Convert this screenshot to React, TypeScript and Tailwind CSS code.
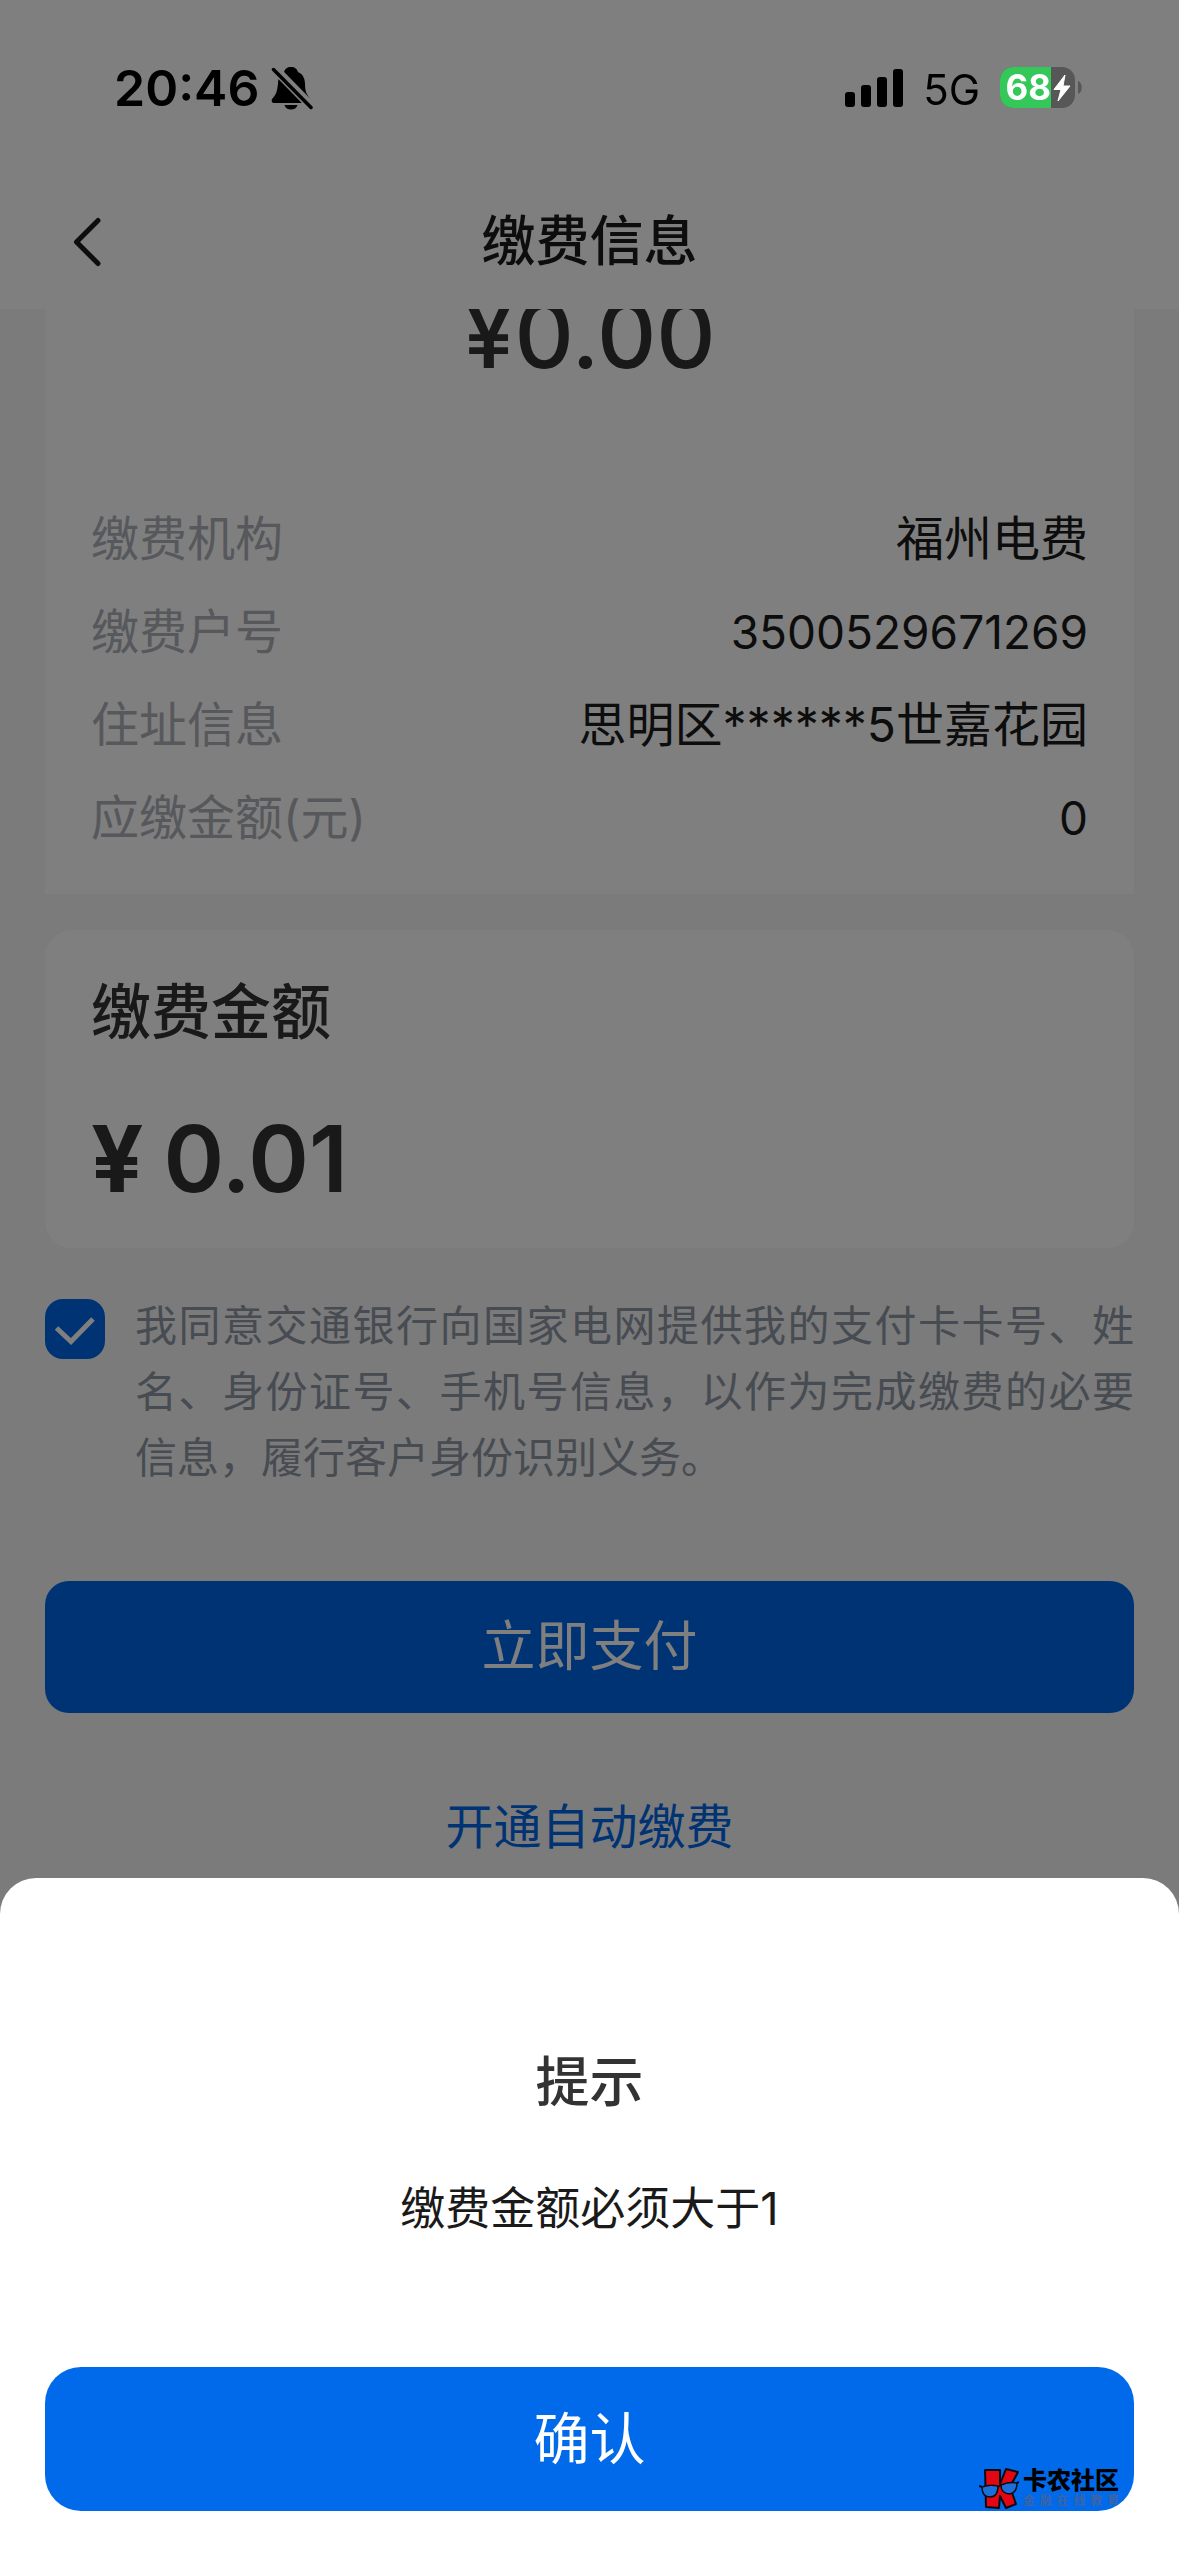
import { useState } from 'react';

const details = [
  { label: '缴费机构', value: '福州电费' },
  { label: '缴费户号', value: '3500529671269', numeric: true },
  { label: '住址信息', value: '思明区******5世嘉花园' },
  { label: '应缴金额(元)', value: '0', numeric: true },
];

function StatusBar() {
  return (
    <div className="fixed inset-x-0 top-0 z-30 flex h-[175px] items-center justify-between pl-[114px] pr-[97px] text-black">
      <div className="flex items-center gap-3">
        <span className="text-[50px] leading-[60px] font-semibold">20:46</span>
        <svg className="h-[44px] w-[42px]" viewBox="0 0 42 44" aria-label="静音">
          <path
            d="M20 1c4 0 6 2 7 5 5 2 7 7 7 12 0 8 2 11 6 16 1 1 0 3-2 3H3c-2 0-3-2-2-4 4-4 5-7 6-15 0-6 2-10 6-12 1-3 3-5 7-5Z"
            fill="black"
          />
          <path d="M13.500 39h13c-.8 3-3.300 4.500-6.500 4.500S14.300 42 13.500 39Z" fill="black" />
          <path d="M2 1l40 41" stroke="#808080" strokeWidth="9" />
          <path d="M2.500 3.500l37.500 38" stroke="black" strokeWidth="3.500" strokeLinecap="round" />
        </svg>
      </div>
      <div className="flex items-center">
        <svg className="h-[38px] w-[58px]" viewBox="0 0 58 38" aria-label="信号">
          <rect x="0" y="23" width="10" height="15" rx="3" />
          <rect x="16" y="16" width="10" height="22" rx="3" />
          <rect x="32" y="8" width="10" height="30" rx="3" />
          <rect x="48" y="0" width="10" height="38" rx="3" />
        </svg>
        <span className="ml-5 pt-1 text-[42px] leading-[48px]">5G</span>
        <div className="ml-5 flex h-[41px] w-[75px] items-center overflow-hidden rounded-[13px] bg-[#575757]">
          <span className="flex h-full w-[51px] items-center justify-end bg-[#34c759] text-[35px] leading-[41px] font-bold text-white">
            68
          </span>
          <svg className="ml-0.5 h-[26px] w-[18px]" viewBox="0 0 18 26" aria-label="充电中">
            <path d="M12 0L1 14.500h7L5 26 17 11h-7Z" fill="white" stroke="white" strokeLinejoin="round" />
          </svg>
        </div>
        <svg className="ml-[3px] h-[13px] w-[4px]" viewBox="0 0 4 13" aria-hidden="true">
          <path d="M0 0c5 2 5 11 0 13Z" fill="#575757" />
        </svg>
      </div>
    </div>
  );
}

function Header() {
  return (
    <header className="sticky top-0 z-10 bg-white pt-[171px]">
      <div className="grid h-[138px] grid-cols-[1fr_auto_1fr] items-center px-[72px] pt-1 text-[#1a1a1a]">
        <button type="button" aria-label="返回" className="flex justify-self-start">
          <svg className="h-[50px] w-[30px]" viewBox="0 0 30 50" fill="none">
            <path
              d="M26 3.500L4.500 25 26 46.500"
              stroke="currentColor"
              strokeWidth="5"
              strokeLinecap="round"
              strokeLinejoin="round"
            />
          </svg>
        </button>
        <h1 className="text-[54px] leading-[60px] font-medium">缴费信息</h1>
      </div>
    </header>
  );
}

function Watermark() {
  return (
    <div className="pointer-events-none absolute right-[60px] bottom-[46px] flex items-center gap-1">
      <svg className="h-[42px] w-[40px]" viewBox="0 0 40 42" aria-hidden="true">
        <path
          d="M6 2h15v14l6-15 12 3-8 15 6 17-10 4-6-12-1 12-13-1Z"
          fill="#e30613"
          stroke="#0b0b14"
          strokeWidth="2"
          strokeLinejoin="round"
        />
        <path
          d="M3 19c5-2 11-2 16-1 0 7-3 11-8 11S3 26 3 19ZM22 17c5-2 11-3 16-2 0 7-2 10-7 11-5 0-9-3-9-9Z"
          fill="#1c6fd8"
          stroke="#0b0b14"
          strokeWidth="1.500"
        />
        <path d="M0 18l3 1M19 19l3-2M38 15l2-1" stroke="#0b0b14" strokeWidth="2" />
      </svg>
      <div className="w-24">
        <p className="text-2xl leading-6 font-black text-black">卡农社区</p>
        <p className="flex justify-between text-xs leading-4 font-bold text-[#3f64a3]">
          {Array.from('金融在线教育').map((char) => (
            <span key={char}>{char}</span>
          ))}
        </p>
      </div>
    </div>
  );
}

export default function App() {
  const [amount, setAmount] = useState('0.01');
  const [agreed, setAgreed] = useState(true);
  const [showAlert, setShowAlert] = useState(true);

  return (
    <div
      lang="zh-CN"
      className="min-h-screen bg-[#f6f6f6] font-['Inter','Noto_Sans_CJK_SC',sans-serif] text-[#1a1a1a]"
    >
      <StatusBar />
      <Header />

      <main className="px-[45px]">
        <section className="bg-white px-[46px] pb-[30px]">
          <p className="-mt-[22px] text-center text-[92px] leading-[96px] font-medium text-[#333333]">¥0.00</p>
          <dl className="pt-[109px] text-5xl">
            {details.map(({ label, value, numeric }) => (
              <div key={label} className="flex h-[93px] items-center justify-between">
                <dt className="text-[#aeb0b8]">{label}</dt>
                <dd className={numeric ? 'text-[46px]' : ''}>{value}</dd>
              </div>
            ))}
          </dl>
        </section>

        <section className="mt-9 rounded-[27px] bg-white px-[46px] pt-[52px] pb-[41px] text-[#333333]">
          <label htmlFor="amount" className="block text-[60px] leading-[60px] font-medium">
            缴费金额
          </label>
          <div className="mt-[69px] flex items-center gap-5">
            <span className="text-[92px] leading-[96px] font-bold">¥</span>
            <input
              id="amount"
              type="text"
              inputMode="decimal"
              value={amount}
              onChange={(e) => setAmount(e.target.value)}
              className="h-24 min-w-0 flex-1 text-[92px] leading-[96px] font-semibold outline-none"
            />
          </div>
        </section>

        <label className="mt-[45px] flex items-start gap-[30px]">
          <span className="mt-1.5 grid shrink-0">
            <input
              type="checkbox"
              checked={agreed}
              onChange={(e) => setAgreed(e.target.checked)}
              className="peer col-start-1 row-start-1 h-[60px] w-[60px] appearance-none rounded-[18px] border-2 border-[#c4c8d0] checked:border-0 checked:bg-[#0066e6]"
            />
            <svg
              className="col-start-1 row-start-1 hidden h-[60px] w-[60px] peer-checked:block"
              viewBox="0 0 60 60"
              fill="none"
            >
              <path d="M11.500 29L26 42.500 48 20" stroke="white" strokeWidth="5" />
            </svg>
          </span>
          <span className="flex-1 text-justify text-[42px] leading-[66px] text-[#8e96a4]">
            我同意交通银行向国家电网提供我的支付卡卡号、姓名、身份证号、手机号信息，以作为完成缴费的必要信息，履行客户身份识别义务。
          </span>
        </label>

        <button
          type="button"
          onClick={() => setShowAlert(true)}
          className="mt-[90px] h-[132px] w-full rounded-3xl bg-[#0066e6] text-[54px] leading-[60px] text-white"
        >
          立即支付
        </button>
        <a href="#auto-pay" className="mx-auto mt-[84px] block w-fit text-5xl leading-[60px] text-[#0066e6]">
          开通自动缴费
        </a>
      </main>

      {showAlert && (
        <div className="fixed inset-0 z-20 flex items-end bg-black/50">
          <div
            role="dialog"
            aria-modal="true"
            aria-labelledby="alert-title"
            className="relative w-full rounded-t-[36px] bg-white px-[45px] pt-[175px] pb-[45px] text-center"
          >
            <h2 id="alert-title" className="text-[54px] leading-[60px] font-medium text-[#333333]">
              提示
            </h2>
            <p className="mt-[66px] text-[45px] leading-[60px]">缴费金额必须大于1</p>
            <button
              type="button"
              onClick={() => setShowAlert(false)}
              className="mt-32 h-36 w-full rounded-[36px] bg-[#006aea] text-[56px] leading-[60px] text-white"
            >
              确认
            </button>
            <Watermark />
          </div>
        </div>
      )}
    </div>
  );
}
